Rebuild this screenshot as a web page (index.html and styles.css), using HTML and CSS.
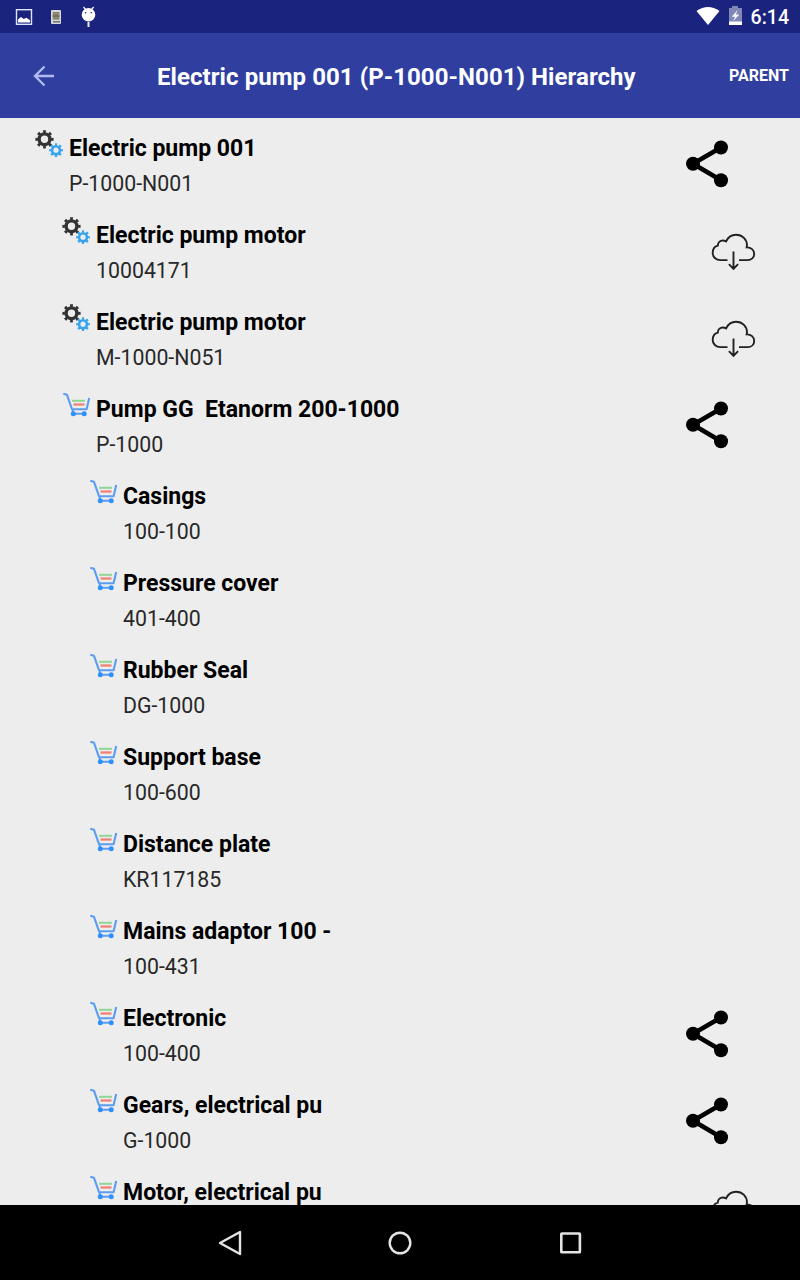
FILE: index.html
```html
<!DOCTYPE html>
<html lang="en">
<head>
<meta charset="utf-8">
<title>Hierarchy</title>
<link rel="stylesheet" href="styles.css">
</head>
<body>
<svg class="sprite" aria-hidden="true">
  <symbol id="gears" viewBox="0 0 36 36">
    <g fill="none" stroke="#333">
      <circle cx="11.5" cy="13.3" r="5.4" stroke-width="3.4"/>
      <circle cx="11.5" cy="13.3" r="7.7" stroke-width="2.8" pathLength="80" stroke-dasharray="4.6 5.4" stroke-dashoffset="2.3"/>
    </g>
    <g fill="none" stroke="#36a3ee">
      <circle cx="23" cy="24.2" r="3.9" stroke-width="2.6"/>
      <circle cx="23" cy="24.2" r="5.8" stroke-width="2.2" pathLength="80" stroke-dasharray="4.8 5.2" stroke-dashoffset="2.4"/>
    </g>
  </symbol>
  <symbol id="cart" viewBox="0 0 36 36">
    <path d="M12 13.8H25" stroke="#8fd694" stroke-width="2"/>
    <path d="M13.5 17.5H24.5" stroke="#f08078" stroke-width="2.3"/>
    <path d="M3.3 6.8L7 7.8L12 22.2H26.6L29.2 11M12.4 22.4L13.3 26.8H24" fill="none" stroke="#5b9df0" stroke-width="2.1" stroke-linejoin="round"/>
    <circle cx="13.3" cy="26.8" r="2.5" fill="#2e90fa"/>
    <circle cx="24.2" cy="26.8" r="2.5" fill="#2e90fa"/>
  </symbol>
  <symbol id="share" viewBox="0 0 44 48">
    <path d="M36 7.5L8 23.8L36 40.3" fill="none" stroke="#000" stroke-width="4.6"/>
    <circle cx="8" cy="23.8" r="7"/><circle cx="36" cy="7.5" r="7"/><circle cx="36" cy="40.3" r="7"/>
  </symbol>
  <symbol id="cloud" viewBox="0 0 46 40">
    <path d="M17.5 28.1H10.5C5.8 28.1 2.7 24.8 2.7 20.9C2.7 17.1 4.8 14.5 7.8 13.7C7.7 10.5 10.1 8.5 12.8 8.5Q14.5 8.5 16.1 9.4C18.1 5.2 21.8 2.8 26 2.8C32.5 2.8 37 7.6 37 13.3L36.6 15.4C41 15.1 44.2 18.1 44.2 21.9C44.2 25.6 41.4 28.1 37.5 28.1H29M23.5 19.5V36.5M18.9 32.2L23.5 36.8L28.1 32.2" fill="none" stroke="#222" stroke-width="1.9"/>
  </symbol>
</svg>
<div class="screen">
  <div class="status">
    <svg class="status-left" viewBox="0 0 110 33">
      <rect x="16.5" y="9.7" width="15" height="14.6" fill="none" stroke="#dfe3fb" stroke-width="1.4"/>
      <path d="M18 22.6V19.5L21 17L23.7 19L26.5 17.7L30 20.2V22.6Z" fill="#fff"/>
      <rect x="51" y="10" width="10" height="14" rx="1" fill="#d8d8d8"/>
      <rect x="52.7" y="12" width="6.8" height="7.7" fill="#8b8873"/>
      <path d="M52.7 16H59.5" stroke="#5d5b4c"/>
      <path d="M53 21.8H60" stroke="#55575f" stroke-width="1.2"/>
      <circle cx="88.5" cy="14.7" r="6.8" fill="#fff"/>
      <path d="M83.5 7L86 10M93.7 7L91 10" stroke="#fff" stroke-width="1.2"/>
      <path d="M88.5 22V27" stroke="#e8eaf8" stroke-width="2"/>
      <circle cx="85.7" cy="12.8" r=".8" fill="#1a237e"/><circle cx="91.3" cy="12.8" r=".8" fill="#1a237e"/>
    </svg>
    <div class="status-right">
      <svg class="status-icons" viewBox="0 0 50 33">
        <path d="M1.5 11Q13 2.8 24.5 11L13 25Z" fill="#fff"/>
        <path d="M34 8H37V6H43V8H47V22H34Z" fill="#8287b9"/>
        <path d="M34 21.5H47V25H34Z" fill="#fff"/>
        <path d="M42.7 10L36.8 16.8H40.2L38.2 21.3L44.2 14.6H40.8Z" fill="#fff"/>
      </svg>
      <span class="clock">6:14</span>
    </div>
  </div>
  <header class="bar">
    <svg class="back" viewBox="0 0 24 24"><path d="M22 12H3M12.5 2.5L3 12L12.5 21.5" fill="none" stroke="#b3bbee" stroke-width="2.3"/></svg>
    <h1 class="heading">Electric pump 001 (P-1000-N001) Hierarchy</h1>
    <span class="parent">PARENT</span>
  </header>
  <main class="list">
    <div class="row l0"><svg class="kind"><use href="#gears"/></svg><div class="info"><div class="name">Electric pump 001</div><div class="code">P-1000-N001</div></div><svg class="share"><use href="#share"/></svg></div>
    <div class="row l1"><svg class="kind"><use href="#gears"/></svg><div class="info"><div class="name">Electric pump motor</div><div class="code">10004171</div></div><svg class="cloud"><use href="#cloud"/></svg></div>
    <div class="row l1"><svg class="kind"><use href="#gears"/></svg><div class="info"><div class="name">Electric pump motor</div><div class="code">M-1000-N051</div></div><svg class="cloud"><use href="#cloud"/></svg></div>
    <div class="row l1"><svg class="kind"><use href="#cart"/></svg><div class="info"><div class="name">Pump GG&nbsp; Etanorm 200-1000</div><div class="code">P-1000</div></div><svg class="share"><use href="#share"/></svg></div>
    <div class="row l2"><svg class="kind"><use href="#cart"/></svg><div class="info"><div class="name">Casings</div><div class="code">100-100</div></div></div>
    <div class="row l2"><svg class="kind"><use href="#cart"/></svg><div class="info"><div class="name">Pressure cover</div><div class="code">401-400</div></div></div>
    <div class="row l2"><svg class="kind"><use href="#cart"/></svg><div class="info"><div class="name">Rubber Seal</div><div class="code">DG-1000</div></div></div>
    <div class="row l2"><svg class="kind"><use href="#cart"/></svg><div class="info"><div class="name">Support base</div><div class="code">100-600</div></div></div>
    <div class="row l2"><svg class="kind"><use href="#cart"/></svg><div class="info"><div class="name">Distance plate</div><div class="code">KR117185</div></div></div>
    <div class="row l2"><svg class="kind"><use href="#cart"/></svg><div class="info"><div class="name">Mains adaptor 100 -</div><div class="code">100-431</div></div></div>
    <div class="row l2"><svg class="kind"><use href="#cart"/></svg><div class="info"><div class="name">Electronic</div><div class="code">100-400</div></div><svg class="share"><use href="#share"/></svg></div>
    <div class="row l2"><svg class="kind"><use href="#cart"/></svg><div class="info"><div class="name">Gears, electrical pu</div><div class="code">G-1000</div></div><svg class="share"><use href="#share"/></svg></div>
    <div class="row l2"><svg class="kind"><use href="#cart"/></svg><div class="info"><div class="name">Motor, electrical pu</div></div><svg class="cloud"><use href="#cloud"/></svg></div>
  </main>
  <nav class="nav">
    <svg class="nav-icon" viewBox="0 0 30 30"><path d="M25 4V26L5 15Z" fill="none" stroke="#e4e4e4" stroke-width="2.4" stroke-linejoin="round"/></svg>
    <svg class="nav-icon" viewBox="0 0 30 30"><circle cx="15" cy="15" r="10.3" fill="none" stroke="#e4e4e4" stroke-width="2.4"/></svg>
    <svg class="nav-icon" viewBox="0 0 30 30"><rect x="6.3" y="5.5" width="18.6" height="18.8" rx=".6" fill="none" stroke="#e4e4e4" stroke-width="2.6"/></svg>
  </nav>
</div>
</body>
</html>
```
FILE: styles.css
```css
* { box-sizing: border-box; }
body { margin: 0; font-family: Roboto, "Liberation Sans", sans-serif; }
.sprite { display: none; }
.screen { width: 800px; height: 1280px; display: flex; flex-direction: column; background: #ededed; overflow: hidden; }
.status { height: 33px; flex: none; display: flex; justify-content: space-between; background: #1a237e; }
.status-left { width: 110px; height: 33px; }
.status-right { display: flex; padding-right: 11px; }
.status-icons { width: 50px; height: 33px; margin-right: 6px; }
.clock { color: #fff; font-size: 19.5px; font-weight: 500; line-height: 35px; }
.bar { height: 85px; flex: none; display: flex; align-items: center; padding: 0 11px 0 32px; background: #303f9f; color: #fff; }
.back { width: 24px; height: 24px; margin-right: 101px; }
.heading { margin: 2px 0 0; font-size: 24px; letter-spacing: .065px; line-height: 30px; font-weight: 700; white-space: nowrap; }
.parent { margin-left: auto; font-size: 16px; font-weight: 700; }
.list { flex: 1; min-height: 0; overflow: hidden; }
.row { height: 87px; display: flex; align-items: flex-start; }
.l0 { padding-left: 33px; }
.l1 { padding-left: 60px; }
.l2 { padding-left: 87px; }
.kind { width: 36px; height: 36px; margin-top: 8px; flex: none; }
.info { flex: 1; padding-top: 16px; white-space: nowrap; }
.name { font-size: 23px; line-height: 30px; font-weight: 700; color: #000; }
.code { margin-top: 5px; font-size: 21.3px; line-height: 30px; color: #282828; }
.share { width: 44px; height: 48px; margin: 22px 71px 0 0; }
.cloud { width: 46px; height: 40px; margin: 27px 44px 0 0; }
.nav { height: 75px; flex: none; display: flex; justify-content: center; align-items: center; gap: 140px; background: #000; }
.nav-icon { width: 30px; height: 30px; }
```
